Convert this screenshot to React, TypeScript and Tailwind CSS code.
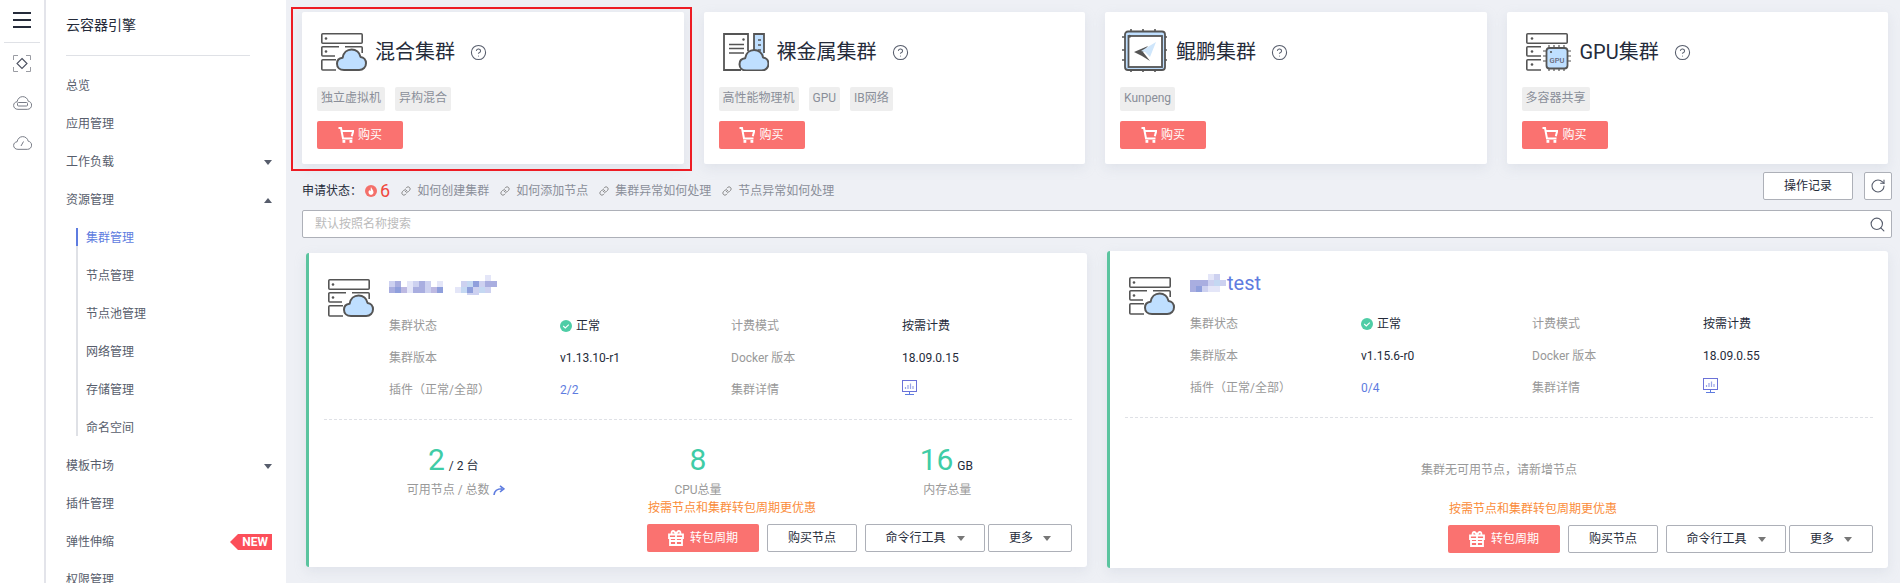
import { CircleHelp, Link, RotateCw, Search } from "lucide-react";

const fontStack = "[font-family:Roboto,'Noto_Sans_CJK_SC',sans-serif]";

const cloudPath =
  "M8 21.5C3.8 21.5 1 18.8 1 15.2 1 11.7 3.6 9.6 6.6 9.3 7.4 4.4 11 1 15.6 1c4.5 0 8 3 8.9 7.4 3.2.4 5.5 3 5.5 6.3 0 3.8-2.8 6.8-6.8 6.8Z";

function Caret({ up = false, className = "" }: { up?: boolean; className?: string }) {
  return (
    <svg width="8" height="5" viewBox="0 0 8 5" className={className}>
      <path d={up ? "M4 0L8 5H0Z" : "M0 0H8L4 5Z"} fill="currentColor" />
    </svg>
  );
}

function Cloud({ x = 0, y = 0 }: { x?: number; y?: number }) {
  return (
    <path
      transform={`translate(${x} ${y})`}
      d={cloudPath}
      fill="#bfdfff"
      stroke="#555"
      strokeWidth="2"
      strokeLinejoin="round"
    />
  );
}

function HybridIcon() {
  return (
    <svg width="46" height="38" viewBox="0 0 46 38" className="shrink-0">
      <g fill="none" stroke="#555" strokeWidth="1.6">
        <rect x="0.8" y="0.8" width="40.4" height="9.4" rx="1" />
        <path d="M24 13.8H40.2a1 1 0 0 1 1 1V20M14 23H1.8a1 1 0 0 1-1-1V14.8a1 1 0 0 1 1-1H18" />
        <path d="M15 26.8H1.8a1 1 0 0 0-1 1V36a1 1 0 0 0 1 1H15" />
      </g>
      <circle cx="5" cy="5.5" r="1.3" fill="#555" />
      <circle cx="5" cy="18.5" r="1.3" fill="#555" />
      <Cloud x={15} y={15.5} />
    </svg>
  );
}

function BareMetalIcon() {
  return (
    <svg width="46" height="38" viewBox="0 0 46 38" className="shrink-0">
      <rect x="31" y="1" width="10" height="22" fill="#bfdfff" />
      <path d="M18 37H1V1H25V18M31 22V1H41V20" fill="none" stroke="#555" strokeWidth="1.8" />
      <path d="M6 11.5H21M6 15.5H21M6 20H21" stroke="#555" strokeWidth="1.6" />
      <circle cx="20.5" cy="6.5" r="1.2" fill="#555" />
      <path d="M35 7H38M35 12H38M35 17H38" stroke="#555" strokeWidth="1.4" />
      <Cloud x={15.5} y={16} />
    </svg>
  );
}

function KunpengIcon() {
  return (
    <svg width="46" height="44" viewBox="0 0 46 44" className="shrink-0 -ml-[2px] -mt-[3px]">
      <path
        d="M9 0V3M21 0V3M33 0V3M9 40V43M21 40V43M33 40V43M0 8H3M0 21H3M0 31H3M42 8H45M42 21H45M42 31H45"
        stroke="#555"
        strokeWidth="1.6"
      />
      <rect x="3" y="2.5" width="40" height="38.5" rx="3" fill="#bfdfff" stroke="#555" strokeWidth="1.8" />
      <rect x="6.5" y="7" width="33.5" height="31" fill="#fff" stroke="#555" strokeWidth="1.8" />
      <circle cx="7.5" cy="7.2" r="1.5" fill="#555" />
      <path d="M12 23L26 17 21 23 28 32 20 27Z" fill="#555" />
      <path d="M19 22L34 13 28 28 23 23Z" fill="#cfe6fb" />
    </svg>
  );
}

function GpuIcon() {
  return (
    <svg width="46" height="38" viewBox="0 0 46 38" className="shrink-0">
      <g fill="none" stroke="#555" strokeWidth="1.6">
        <rect x="0.8" y="0.8" width="40.4" height="9.4" rx="1" />
        <path d="M15 13.8H1.8a1 1 0 0 0-1 1V22a1 1 0 0 0 1 1H15M15 26.8H1.8a1 1 0 0 0-1 1V36a1 1 0 0 0 1 1H15" />
      </g>
      <circle cx="6" cy="5.5" r="1.3" fill="#555" />
      <circle cx="6" cy="18.5" r="1.3" fill="#555" />
      <circle cx="6" cy="31.5" r="1.3" fill="#555" />
      <path
        d="M23 12V15M28 12V15M33 12V15M38 12V15M23 35V38M28 35V38M33 35V38M38 35V38M17 18H20M17 23H20M17 28H20M41 18H45M41 23H45M41 28H45"
        stroke="#555"
        strokeWidth="1.2"
      />
      <rect x="20.5" y="15" width="21" height="20.5" rx="3" fill="#bfdfff" stroke="#555" strokeWidth="1.8" />
      <circle cx="25" cy="19" r="1.1" fill="#555" />
      <text x="31" y="30" textAnchor="middle" fontSize="7.5" fontFamily="Roboto, sans-serif" fontWeight="500" fill="#667">
        GPU
      </text>
    </svg>
  );
}

function CartIcon() {
  return (
    <svg width="16" height="16" viewBox="0 0 16 16" className="shrink-0">
      <path d="M0.5 1H3L5 11.5H14.5M3.6 4H15.2L13.8 9.2" fill="none" stroke="#fff" strokeWidth="2" />
      <rect x="4.5" y="13" width="2.8" height="2.8" fill="#fff" />
      <rect x="11.5" y="13" width="2.8" height="2.8" fill="#fff" />
    </svg>
  );
}

function GiftIcon() {
  return (
    <svg width="16" height="16" viewBox="0 0 16 16" className="shrink-0">
      <path
        d="M1 4.5H15V8H1ZM2 8V15H14V8M1.5 11H14.5M8 4.5V15M4 4.5C3 2.5 3.8 1 5 1 6.5 1 7.5 3 8 4.5 8.5 3 9.5 1 11 1 12.2 1 13 2.5 12 4.5"
        fill="none"
        stroke="#fff"
        strokeWidth="1.8"
      />
    </svg>
  );
}

function MonitorIcon() {
  return (
    <svg width="15" height="15" viewBox="0 0 15 15">
      <rect x="0.5" y="0.5" width="14" height="11" fill="none" stroke="#6b72d8" />
      <path d="M3.5 9V7M6 9V5M8.5 9V3.5M11 9V6" stroke="#9aa5e6" strokeWidth="1.2" />
      <path d="M7.5 12V14M3 14.5H12" stroke="#5e7ce0" />
    </svg>
  );
}

function CheckDot() {
  return (
    <svg width="12" height="12" viewBox="0 0 12 12" className="shrink-0">
      <circle cx="6" cy="6" r="6" fill="#4fcda6" />
      <path d="M3.2 6L5.3 8 8.8 4.6" fill="none" stroke="#fff" strokeWidth="1.1" />
    </svg>
  );
}

function RailIcons() {
  return (
    <div className="flex flex-col items-center">
      <svg width="18" height="17" viewBox="0 0 18 17" className="mt-[12px]">
        <path d="M5 .5H.5V5M13 .5H17.5V5M5 16.5H.5V12M13 16.5H17.5V12" fill="none" stroke="#9a9ca3" />
        <path d="M9 3.5L14 8.5 9 13.5 4 8.5Z" fill="none" stroke="#4b5060" strokeWidth="1.1" />
      </svg>
      <svg width="19" height="14" viewBox="0 0 19 14" className="mt-[24px]">
        <path d={cloudPath} transform="scale(0.62)" fill="none" stroke="#777b86" strokeWidth="1.6" />
        <rect x="4.5" y="6.5" width="10" height="3.5" rx="1" fill="none" stroke="#777b86" />
      </svg>
      <svg width="19" height="14" viewBox="0 0 19 14" className="mt-[26px]">
        <path d={cloudPath} transform="scale(0.62)" fill="none" stroke="#777b86" strokeWidth="1.6" />
        <path d="M8 10L10.5 5.5" stroke="#777b86" />
      </svg>
    </div>
  );
}

const subMenu = ["集群管理", "节点管理", "节点池管理", "网络管理", "存储管理", "命名空间"];

function MenuRow({ label, caret, children }: { label: string; caret?: "up" | "down"; children?: React.ReactNode }) {
  return (
    <div className="flex h-[38px] items-center justify-between pr-[14px] text-xs text-[#575d6c]">
      <span>{label}</span>
      {caret ? <Caret up={caret === "up"} className="text-[#575d6c]" /> : null}
      {children}
    </div>
  );
}

function Sidebar() {
  return (
    <aside className="flex h-full w-[240px] shrink-0 flex-col overflow-hidden bg-white pl-[20px]">
      <div className="flex h-[56px] w-[184px] shrink-0 items-center border-b border-[#dfe1e6] pb-[5px] text-sm text-[#252b3a]">
        云容器引擎
      </div>
      <div className="mt-[11px] flex shrink-0 flex-col">
        <MenuRow label="总览" />
        <MenuRow label="应用管理" />
        <MenuRow label="工作负载" caret="down" />
        <MenuRow label="资源管理" caret="up" />
        <div className="mb-[11px] ml-[10px] mt-[9px] flex flex-col gap-[20px] border-l-2 border-[#dfe1e6]">
          {subMenu.map((item, index) => (
            <div
              key={item}
              className={
                index === 0
                  ? "-ml-[2px] h-[18px] border-l-2 border-[#5e7ce0] pl-[8px] text-xs leading-[20px] text-[#5e7ce0]"
                  : "h-[18px] pl-[8px] text-xs leading-[20px] text-[#575d6c]"
              }
            >
              {item}
            </div>
          ))}
        </div>
        <MenuRow label="模板市场" caret="down" />
        <MenuRow label="插件管理" />
        <MenuRow label="弹性伸缩">
          <span className="flex h-[16px] w-[42px] items-center justify-end bg-[#fc4f5a] pr-[4px] text-xs font-bold leading-none text-white [clip-path:polygon(8px_0,100%_0,100%_100%,8px_100%,0_50%)]">
            NEW
          </span>
        </MenuRow>
        <MenuRow label="权限管理" />
      </div>
    </aside>
  );
}

const buyCards = [
  { title: "混合集群", tags: ["独立虚拟机", "异构混合"], icon: <HybridIcon /> },
  { title: "裸金属集群", tags: ["高性能物理机", "GPU", "IB网络"], icon: <BareMetalIcon /> },
  { title: "鲲鹏集群", tags: ["Kunpeng"], icon: <KunpengIcon /> },
  { title: "GPU集群", tags: ["多容器共享"], icon: <GpuIcon /> },
];

function BuyCard({ title, tags, icon }: { title: string; tags: string[]; icon: React.ReactNode }) {
  return (
    <div className="flex h-[152px] flex-col rounded-[2px] bg-white pl-[15px] shadow-[0_4px_12px_rgba(180,186,205,0.25)]">
      <div className="mt-[21px] flex h-[38px] items-center pl-[4px]">
        {icon}
        <span className="ml-[8px] text-[20px] leading-none text-[#252b3a]">{title}</span>
        <CircleHelp size={17} strokeWidth={1.5} className="ml-[15px] text-[#575d6c]" />
      </div>
      <div className="mt-[16px] flex gap-[10px]">
        {tags.map((tag) => (
          <span key={tag} className="h-[24px] rounded-[2px] bg-[#eeeeee] px-[4px] text-xs leading-[22px] text-[#8a8e99]">
            {tag}
          </span>
        ))}
      </div>
      <button className="mt-[10px] flex h-[28px] w-[86px] items-center justify-center gap-[4px] rounded-[2px] bg-[#fa7270] text-xs text-white">
        <CartIcon />
        购买
      </button>
    </div>
  );
}

const helpLinks = ["如何创建集群", "如何添加节点", "集群异常如何处理", "节点异常如何处理"];

function Toolbar() {
  return (
    <div className="mt-[8px] flex h-[28px] items-end justify-between pl-[16px] pr-[8px]">
      <div className="flex h-[18px] items-center text-xs">
        <span className="text-[#252b3a]">申请状态：</span>
        <svg width="12" height="12" viewBox="0 0 12 12" className="ml-[3px]">
          <circle cx="6" cy="6" r="6" fill="#f4706a" />
          <path d="M6 2C6.5 4 8.5 5 8.5 7.2 8.5 8.7 7.4 9.8 6 9.8 4.6 9.8 3.5 8.7 3.5 7.2 3.5 6.2 4 5.5 4.6 5 4.8 5.8 5.2 6 5.5 6 5.9 4.8 5.6 3.2 6 2Z" fill="#fff" />
        </svg>
        <span className="ml-[3px] text-[18px] leading-none text-[#f0483e]">6</span>
        <div className="ml-[11px] flex gap-[11px]">
          {helpLinks.map((text) => (
            <span key={text} className="flex items-center gap-[6px] text-[#8a8e99]">
              <Link size={10} strokeWidth={2} className="text-[#777]" />
              {text}
            </span>
          ))}
        </div>
      </div>
      <div className="flex gap-[11px]">
        <button className="h-[28px] w-[90px] rounded-[2px] border border-[#adb0b8] bg-white text-xs text-[#252b3a]">操作记录</button>
        <button className="flex h-[28px] w-[28px] items-center justify-center rounded-[2px] border border-[#adb0b8] bg-white text-[#575d6c]">
          <RotateCw size={16} strokeWidth={1.6} />
        </button>
      </div>
    </div>
  );
}

function SearchBar() {
  return (
    <div className="ml-[16px] mr-[8px] mt-[10px] flex h-[28px] items-center justify-between rounded-[2px] border border-[#adb0b8] bg-white pl-[12px] pr-[5px] text-xs text-[#bbbbbb]">
      默认按照名称搜索
      <Search size={17} strokeWidth={1.6} className="text-[#575d6c]" />
    </div>
  );
}

const mosaicColors: Record<string, string> = {
  a: "#e4e6f8",
  b: "#a9aee0",
  c: "#cdd1f0",
  d: "#8f9fdc",
  e: "#c4d8f2",
  f: "#bdb9e2",
};

function Mosaic({ rows, width, height }: { rows: string[]; width: number; height: number }) {
  return (
    <svg width={width} height={height} className="shrink-0">
      {rows.map((row, y) =>
        row.split("").map((cell, x) =>
          cell === "." ? null : <rect key={`${x}-${y}`} x={x * 6} y={y * 6} width="6" height="6" fill={mosaicColors[cell]} />,
        ),
      )}
    </svg>
  );
}

function InfoRow({ label, value, label2, value2 }: { label: string; value: React.ReactNode; label2: string; value2: React.ReactNode }) {
  return (
    <div className="grid h-[32px] grid-cols-[171px_171px_171px_171px] items-center text-xs">
      <span className="text-[#999999]">{label}</span>
      <span className="text-[#252b3a]">{value}</span>
      <span className="text-[#999999]">{label2}</span>
      <span className="text-[#252b3a]">{value2}</span>
    </div>
  );
}

function ClusterFooter() {
  return (
    <div className="mb-[15px] mr-[15px] mt-auto w-[425px] self-end">
      <div className="h-[18px] pl-[1px] text-xs leading-[18px] text-[#fa8c3a]">按需节点和集群转包周期更优惠</div>
      <div className="mt-[7px] flex h-[28px] text-xs text-[#252b3a]">
        <button className="flex w-[112px] items-center justify-center gap-[6px] rounded-[2px] bg-[#fa7270] text-white">
          <GiftIcon />
          转包周期
        </button>
        <button className="ml-[8px] w-[90px] rounded-[2px] border border-[#adb0b8] bg-white">购买节点</button>
        <button className="ml-[8px] flex w-[120px] items-center justify-center gap-[11px] rounded-[2px] border border-[#adb0b8] bg-white">
          命令行工具
          <Caret className="text-[#777]" />
        </button>
        <button className="ml-[3px] flex w-[84px] items-center justify-center gap-[10px] rounded-[2px] border border-[#adb0b8] bg-white">
          更多
          <Caret className="text-[#777]" />
        </button>
      </div>
    </div>
  );
}

function ClusterCard({
  name,
  version,
  docker,
  plugins,
  className,
  children,
}: {
  name: React.ReactNode;
  version: string;
  docker: string;
  plugins: string;
  className: string;
  children?: React.ReactNode;
}) {
  return (
    <div className={`flex w-[781px] flex-col rounded-[3px] border-l-[3px] border-[#5bc49f] bg-white shadow-[0_4px_12px_rgba(180,186,205,0.25)] ${className}`}>
      <div className="flex pl-[19px]">
        <div className="mt-[26px] shrink-0">
          <HybridIcon />
        </div>
        <div className="ml-[15px] flex flex-col">
          <div className="mt-[20px] flex h-[24px] items-center text-[20px] leading-none text-[#5e7ce0]">{name}</div>
          <div className="mt-[13px]">
            <InfoRow
              label="集群状态"
              value={
                <span className="flex items-center gap-[4px]">
                  <CheckDot />
                  正常
                </span>
              }
              label2="计费模式"
              value2="按需计费"
            />
            <InfoRow label="集群版本" value={version} label2="Docker 版本" value2={docker} />
            <InfoRow
              label="插件（正常/全部）"
              value={<span className="text-[#5e7ce0]">{plugins}</span>}
              label2="集群详情"
              value2={
                <span className="-mt-[6px] block">
                  <MonitorIcon />
                </span>
              }
            />
          </div>
        </div>
      </div>
      <div className="ml-[15px] mr-[15px] mt-[13px] border-t border-dashed border-[#dfe1e6]" />
      {children}
      <ClusterFooter />
    </div>
  );
}

function StatBlock({
  value,
  unit,
  label,
  extra,
  numberClass = "",
}: {
  value: string;
  unit: string;
  label: string;
  extra?: React.ReactNode;
  numberClass?: string;
}) {
  return (
    <div className="flex flex-col items-center">
      <div className={`flex h-[36px] items-baseline gap-[4px] leading-none ${numberClass}`}>
        <span className="text-[30px] text-[#3fcca6]">{value}</span>
        {unit ? <span className="text-xs text-[#252b3a]">{unit}</span> : null}
      </div>
      <div className="flex h-[18px] items-center gap-[3px] text-xs text-[#999999]">
        {label}
        {extra}
      </div>
    </div>
  );
}

export default function App() {
  return (
    <div className={`relative flex h-[583px] w-[1900px] overflow-hidden bg-[#eef0f5] ${fontStack}`}>
      <nav className="flex w-[46px] shrink-0 flex-col border-r-2 border-[#e3e4ea] bg-white">
        <div className="flex h-[42px] justify-center pt-[12px]">
          <svg width="18" height="16" viewBox="0 0 18 16">
            <path d="M0 1H18M0 8H18M0 15H18" stroke="#252b3a" strokeWidth="1.8" />
          </svg>
        </div>
        <div className="mx-[4px] border-t border-[#dfe1e6]" />
        <RailIcons />
      </nav>

      <Sidebar />

      <main className="min-w-0 flex-1">
        <div className="grid grid-cols-4 gap-[20px] pl-[16px] pr-[12px] pt-[12px]">
          {buyCards.map((card) => (
            <BuyCard key={card.title} {...card} />
          ))}
        </div>
        <Toolbar />
        <SearchBar />
        <div className="mt-[13px] flex items-start gap-[20px] pl-[20px]">
          <ClusterCard
            className="mt-[2px] h-[314px]"
            name={
              <Mosaic
                width={114}
                height={20}
                rows={["................a..", "cb.acbc.a...cedcbb.", "bdfabbcfd..aedcec..", ".............cc...."]}
              />
            }
            version="v1.13.10-r1"
            docker="18.09.0.15"
            plugins="2/2"
          >
            <div className="ml-[15px] mr-[15px] mt-[25px] grid grid-cols-3">
              <div className="pl-[14px]">
                <StatBlock
                  value="2"
                  unit="/ 2 台"
                  numberClass="pr-[5px]"
                  label="可用节点 / 总数"
                  extra={
                    <svg width="12" height="11" viewBox="0 0 12 11">
                      <path d="M1 10C1.5 5.5 4.5 3.8 9 3.8M7 .8L10.8 3.9 7 7" fill="none" stroke="#5e7ce0" strokeWidth="1.6" />
                    </svg>
                  }
                />
              </div>
              <StatBlock value="8" unit="" label="CPU总量" />
              <StatBlock value="16" unit="GB" numberClass="pr-[2px]" label="内存总量" />
            </div>
          </ClusterCard>
          <ClusterCard
            className="h-[317px]"
            name={
              <>
                <Mosaic width={36} height={18} rows={["...ac.", "bbbcec", "bdcaa."]} />
                <span className="ml-[1px]">test</span>
              </>
            }
            version="v1.15.6-r0"
            docker="18.09.0.55"
            plugins="0/4"
          >
            <div className="ml-[15px] mr-[15px] mt-[43px] text-center text-xs leading-[18px] text-[#999999]">
              集群无可用节点，请新增节点
            </div>
          </ClusterCard>
        </div>
      </main>

      {/* annotation frame from the screenshot */}
      <div className="pointer-events-none absolute left-[291px] top-[7px] h-[164px] w-[401px] border-2 border-[#ed1c24]" />
    </div>
  );
}
